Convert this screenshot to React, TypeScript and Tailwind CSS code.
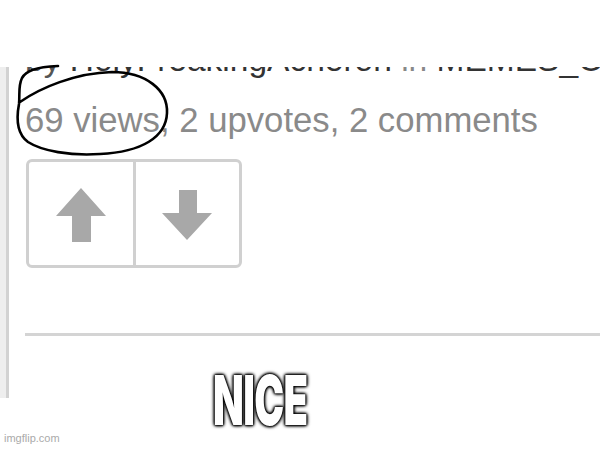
import React from 'react';

// hand drawn circle around "69 views"
function Scribble() {
  return (
    <svg className="absolute left-0 top-0 pointer-events-none" width="600" height="450" viewBox="0 0 600 450" fill="none">
      <path
        d="M 20 102 C 40 88, 75 73, 112 72 C 146 72, 168 90, 167 113 C 166 137, 142 152, 100 154 C 70 156, 42 151, 28 142 C 17 134, 16 120, 19 104 C 20 94, 18 86, 22 78 C 26 71, 35 67, 58 66"
        stroke="#000"
        strokeWidth="2.6"
        strokeLinecap="round"
      />
    </svg>
  );
}

function VoteButtons() {
  return (
    <div className="flex w-[216px] h-[109px] border-[3px] border-[#d0d0d0] rounded-[6px]">
      <div className="flex flex-1 items-center justify-center">
        <svg width="50" height="54" viewBox="0 0 50 54" className="mt-[2px]">
          <polygon points="25,0 50,28 35,28 35,54 16,54 16,28 0,28" fill="#a8a8a8" />
        </svg>
      </div>
      <div className="w-[3px] bg-[#d0d0d0]" />
      <div className="flex flex-1 items-center justify-center">
        <svg width="50" height="50" viewBox="0 0 50 50" className="mt-[2px]">
          <polygon points="17,0 35,0 35,23 50,23 25,50 0,23 17,23" fill="#a8a8a8" />
        </svg>
      </div>
    </div>
  );
}

export default function App() {
  return (
    <div className="relative w-[600px] h-[450px] overflow-hidden bg-white font-['Liberation_Sans',Arial,sans-serif]">
      <div className="h-[67px]" />
      <div className="flex h-[331px]">
        <div className="w-[6px] bg-[#eeeeee]" />
        <div className="w-[3px] bg-[#d2d2d2]" />
        <div className="flex-1 pl-[16px] overflow-hidden">
          <div className="h-[16px] overflow-hidden">
            <div className="-mt-[27px] h-[40px] leading-[40px] text-[33.5px] whitespace-nowrap">
              <span className="text-[#555]">by </span>
              <span className="text-[#333]">HolyFreakingAcheron</span>
              <span className="text-[#888]"> in </span>
              <span className="text-[#333]">MEMES_OVERLOAD</span>
            </div>
          </div>
          <div className="mt-[17px] h-[40px] leading-[40px] text-[34.7px] text-[#8a8a8a] whitespace-nowrap">
            69 views, 2 upvotes, 2 comments
          </div>
          <div className="mt-[19px] pl-[1px]">
            <VoteButtons />
          </div>
          <div className="mt-[65px] h-[3px] bg-[#d4d4d4]" />
        </div>
      </div>
      <Scribble />
      <div className="absolute left-[213px] top-[366px] text-white font-['Inter',sans-serif] font-black text-[69px] leading-none tracking-[-1px] origin-left scale-x-[0.58] [text-shadow:0_0_2px_#000,0_0_3px_#000,0_0_4px_#000,0_0_5px_#000,0_0_6px_#000]">
        NICE
      </div>
      <div className="absolute left-[4px] top-[433px] text-[11px] leading-none text-[#aaaaaa]">imgflip.com</div>
    </div>
  );
}
